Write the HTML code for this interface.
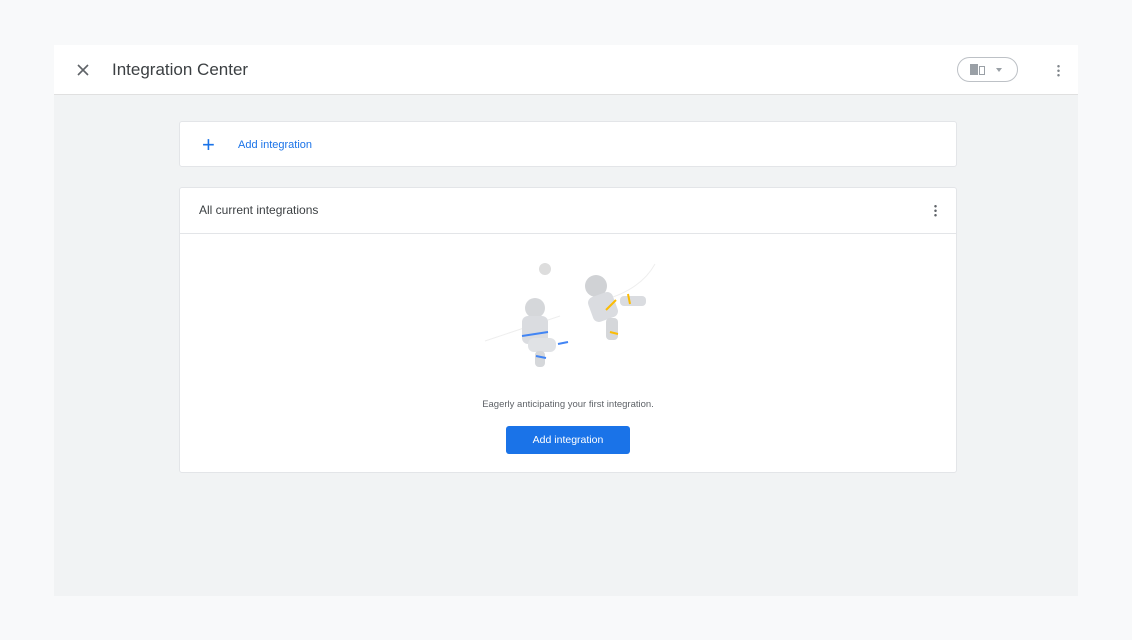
<!DOCTYPE html>
<html><head><style>
*{box-sizing:border-box;margin:0;padding:0}
body{width:1132px;height:640px;background:#f8f9fa;font-family:"Liberation Sans",sans-serif;position:relative;overflow:hidden}
.win{position:absolute;left:54px;top:45px;width:1024px;height:551px;background:#f1f3f4}
.hdr{position:absolute;left:0;top:0;width:1024px;height:50px;background:#fff;border-bottom:1px solid #e0e0e0}
.card{position:absolute;background:#fff;border:1px solid #e3e5e8;border-radius:3px}
</style></head><body>
<div class="win">
 <div class="hdr">
  <svg style="position:absolute;left:23px;top:19px" width="12" height="12"><path d="M1 1L11 11M11 1L1 11" stroke="#5f6368" stroke-width="1.6"/></svg>
  <div style="position:absolute;left:58px;top:15px;font-size:17px;color:#3c4043">Integration Center</div>
  <div style="position:absolute;left:903px;top:12px;width:61px;height:25px;border:1px solid #bdc1c6;border-radius:13px">
   <div style="position:absolute;left:12px;top:6px;width:8px;height:11px;background:#9aa0a6"></div>
   <div style="position:absolute;left:21px;top:8px;width:6px;height:9px;border:1px solid #9aa0a6"></div>
   <div style="position:absolute;left:38px;top:10px;border:3px solid transparent;border-top:4px solid #9aa0a6"></div>
  </div>
  <div style="position:absolute;left:1003px;top:19px;width:3px;height:13px;background:radial-gradient(circle,#80868b 1px,transparent 1.5px) 0 0/3px 4.5px"></div>
 </div>
 <div class="card" style="left:125px;top:76px;width:778px;height:46px">
  <div style="position:absolute;left:22px;top:10px;font-size:22px;color:#1a73e8;font-weight:300">+</div>
  <div style="position:absolute;left:58px;top:17px;font-size:11px;color:#1a73e8">Add integration</div>
 </div>
 <div class="card" style="left:125px;top:142px;width:778px;height:286px">
  <div style="position:absolute;left:0;top:0;width:776px;height:46px;border-bottom:1px solid #e3e5e8">
   <div style="position:absolute;left:19px;top:15px;font-size:12px;color:#3c4043">All current integrations</div>
   <div style="position:absolute;left:754px;top:16px;width:3px;height:13px;background:radial-gradient(circle,#5f6368 1px,transparent 1.5px) 0 0/3px 4.5px"></div>
  </div>
  <svg style="position:absolute;left:300px;top:68px" width="180" height="120" viewBox="0 0 180 120">
   <path d="M5 85 Q50 70 80 60" stroke="#eee" fill="none"/>
   <path d="M120 45 Q160 35 175 8" stroke="#eee" fill="none"/>
   <circle cx="65" cy="13" r="6" fill="#ddd"/>
   <circle cx="55" cy="52" r="10" fill="#d5d7da"/>
   <rect x="42" y="60" width="26" height="28" rx="6" fill="#dadce0"/>
   <rect x="48" y="82" width="28" height="14" rx="6" fill="#e0e2e5"/>
   <rect x="55" y="95" width="10" height="16" rx="4" fill="#d5d7da"/>
   <path d="M42 80 L68 76 M56 100 L66 102 M78 88 L88 86" stroke="#4285f4" stroke-width="2"/>
   <circle cx="116" cy="30" r="11" fill="#d0d2d5"/>
   <rect x="110" y="38" width="26" height="26" rx="6" fill="#dadce0" transform="rotate(-20 123 51)"/>
   <rect x="126" y="62" width="12" height="22" rx="4" fill="#d5d7da"/>
   <rect x="140" y="40" width="26" height="10" rx="4" fill="#dadce0"/>
   <path d="M126 54 L136 44 M130 76 L138 78 M148 38 L150 48" stroke="#fbbc04" stroke-width="2"/>
  </svg>
  <div style="position:absolute;left:0;width:776px;top:211px;text-align:center;font-size:9.5px;color:#5f6368">Eagerly anticipating your first integration.</div>
  <div style="position:absolute;left:326px;top:238px;width:124px;height:28px;background:#1a73e8;border-radius:3px;color:#fff;font-size:10.5px;text-align:center;line-height:28px">Add integration</div>
 </div>
</div>
</body></html>
